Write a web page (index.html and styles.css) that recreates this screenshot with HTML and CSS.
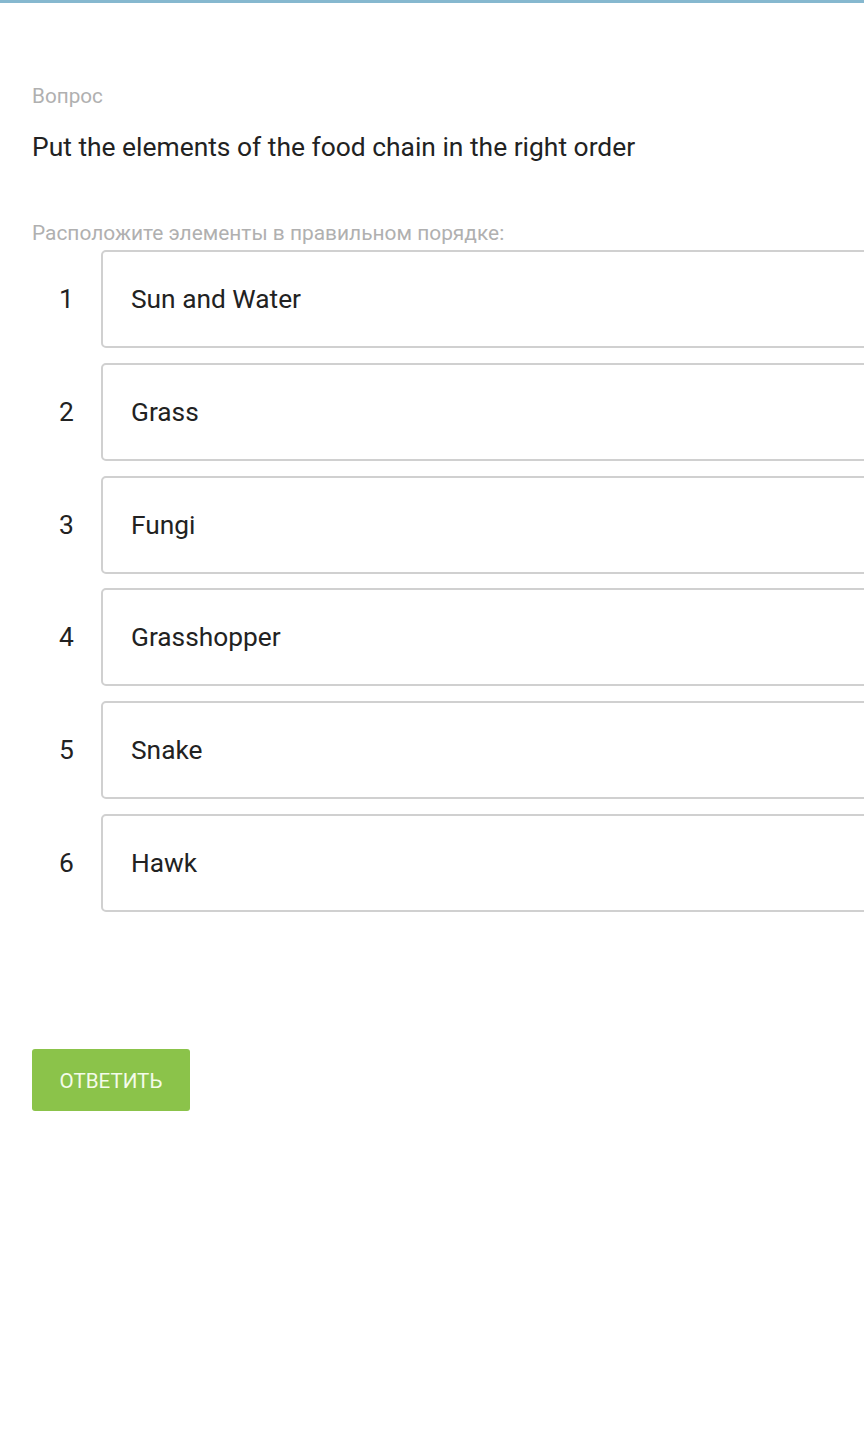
FILE: index.html
```html
<!DOCTYPE html>
<html lang="ru">
<head>
<meta charset="utf-8">
<link rel="stylesheet" href="styles.css">
</head>
<body>
<div class="topbar"></div>
<main class="page">
  <div class="label">Вопрос</div>
  <div class="question">Put the elements of the food chain in the right order</div>
  <div class="hint">Расположите элементы в правильном порядке:</div>
  <ol class="list">
    <li class="row"><span class="num">1</span><div class="box">Sun and Water</div></li>
    <li class="row"><span class="num">2</span><div class="box">Grass</div></li>
    <li class="row"><span class="num">3</span><div class="box">Fungi</div></li>
    <li class="row"><span class="num">4</span><div class="box">Grasshopper</div></li>
    <li class="row"><span class="num">5</span><div class="box">Snake</div></li>
    <li class="row"><span class="num">6</span><div class="box">Hawk</div></li>
  </ol>
  <button class="submit">ОТВЕТИТЬ</button>
</main>
</body>
</html>
```
FILE: styles.css
```css
html, body {
  margin: 0;
  padding: 0;
  background: #ffffff;
}
body {
  font-family: Roboto, "Liberation Sans", sans-serif;
  color: #212121;
  width: 864px;
  min-height: 1448px;
  overflow: hidden;
}
.topbar {
  height: 3px;
  background: #86b8cf;
}
.page {
  padding: 78px 0 0 32px;
  overflow: hidden;
}
.label {
  font-size: 20.7px;
  line-height: 30px;
  color: #b0b0b0;
}
.question {
  font-size: 26.4px;
  line-height: 34px;
  margin-top: 19px;
  color: #222222;
}
.hint {
  font-size: 20.9px;
  line-height: 30px;
  color: #b0b0b0;
  margin-top: 54px;
}
.list {
  list-style: none;
  margin: 2px 0 0;
  padding: 0;
  display: flex;
  flex-direction: column;
  gap: 14.8px;
}
.row {
  display: flex;
  align-items: center;
}
.num {
  width: 69px;
  flex: none;
  text-align: center;
  font-size: 26.4px;
  color: #222222;
}
.box {
  flex: none;
  width: 860px;
  height: 94px;
  border: 2px solid #d0d0d0;
  border-radius: 5px;
  display: flex;
  align-items: center;
  padding-left: 28px;
  font-size: 26.3px;
  color: #222222;
}
.submit {
  display: block;
  margin-top: 137px;
  width: 158px;
  height: 62px;
  border: none;
  border-radius: 3px;
  background: #8bc34a;
  color: #f4fbe9;
  font-family: Roboto, "Liberation Sans", sans-serif;
  font-size: 20.6px;
  padding: 2px 0 0;
}
```
